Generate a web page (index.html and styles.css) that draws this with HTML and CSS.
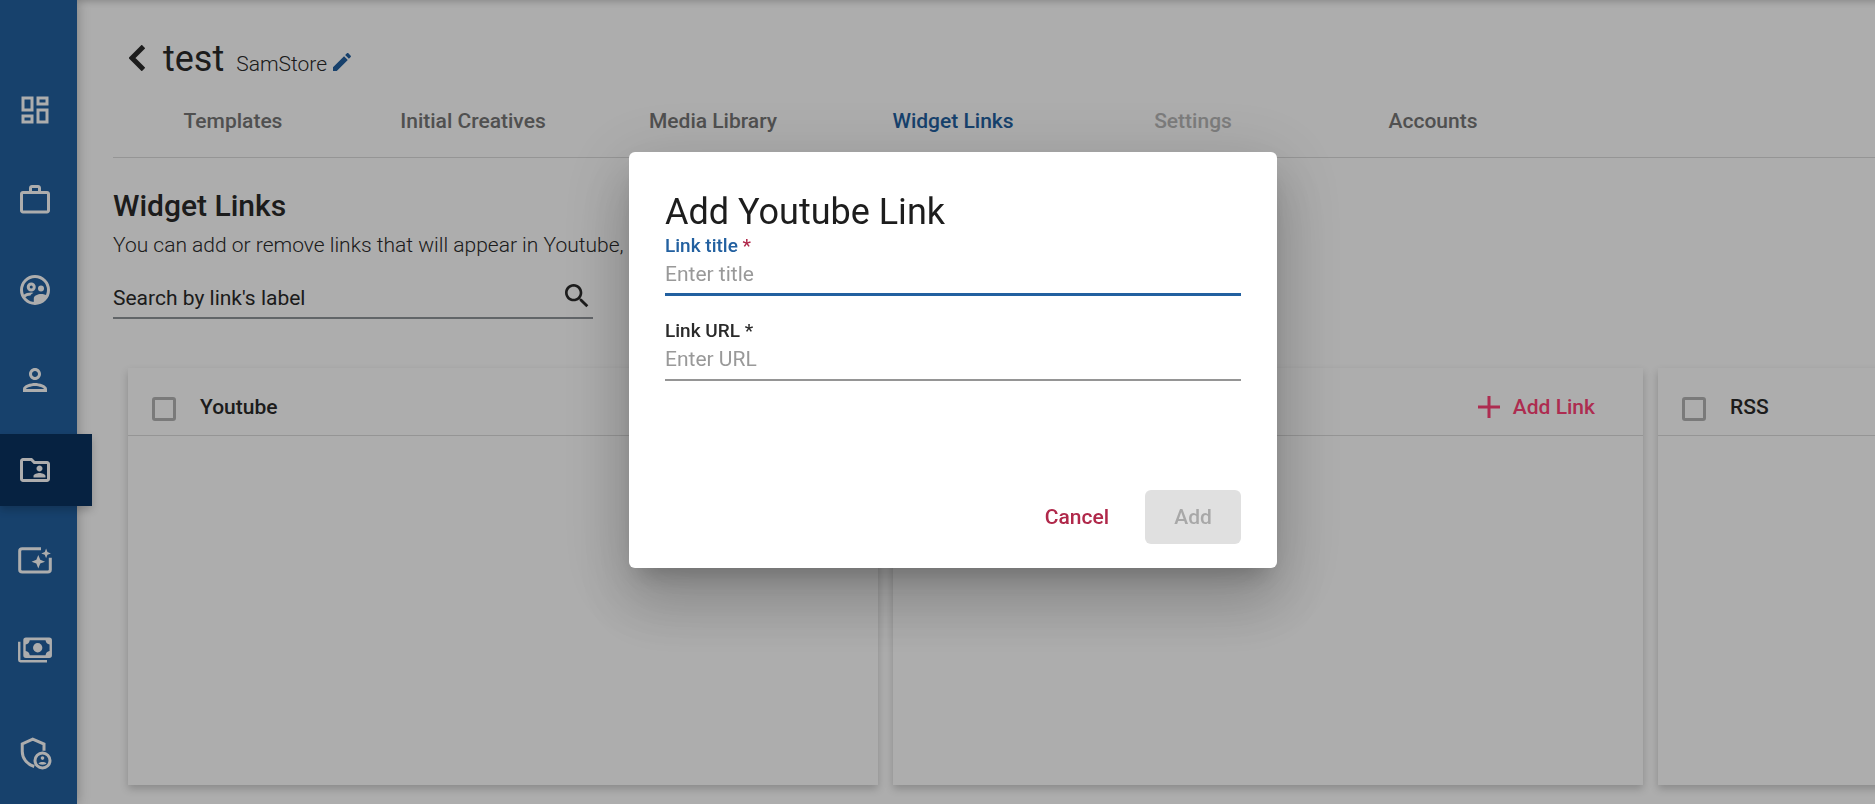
FILE: index.html
```html
<!DOCTYPE html>
<html lang="en">
<head>
    <meta charset="UTF-8">
    <meta name="viewport" content="width=device-width, initial-scale=1.0">
    <title>Widget Links</title>
    <link rel="stylesheet" href="styles.css">
</head>
<body>
    <div class="app">
        <!-- Sidebar -->
        <nav class="sidebar" aria-label="Main">
            <a class="nav-item" href="#" aria-label="Dashboard">
                <svg class="icon" viewBox="0 0 24 24"><path d="M19 5v2h-4V5h4M9 5v6H5V5h4m10 8v6h-4v-6h4M9 17v2H5v-2h4M21 3h-8v6h8V3zM11 3H3v10h8V3zm10 8h-8v10h8V11zm-10 4H3v6h8v-6z"/></svg>
            </a>
            <a class="nav-item" href="#" aria-label="Work">
                <svg class="icon" viewBox="0 0 24 24"><path d="M14 6V4h-4v2h4zM4 8v11h16V8H4zm16-2c1.11 0 2 .89 2 2v11c0 1.11-.89 2-2 2H4c-1.11 0-2-.89-2-2l.01-11c0-1.11.88-2 1.99-2h4V4c0-1.11.89-2 2-2h4c1.11 0 2 .89 2 2v2h4z"/></svg>
            </a>
            <a class="nav-item" href="#" aria-label="Groups">
                <svg class="icon" viewBox="0 0 24 24">
                    <circle class="line" cx="12" cy="12" r="9"/>
                    <circle class="line" cx="9.5" cy="10" r="2"/>
                    <circle cx="16" cy="11" r="2"/>
                    <path d="M4 15.5C5.5 14 7.7 13.6 9.5 13.6L11 13.8C10 14.4 9.3 15 9 15.7C7.5 15.8 6.3 16.2 5.3 17zM11.2 21V17.6C11.2 15.8 14 14.7 16 14.7C17.5 14.7 19 15 20.5 15.8C19 19 16 21.2 11.2 21z"/>
                </svg>
            </a>
            <a class="nav-item" href="#" aria-label="Users">
                <svg class="icon" viewBox="0 0 24 24"><path d="M12 6c1.1 0 2 .9 2 2s-.9 2-2 2-2-.9-2-2 .9-2 2-2m0 10c2.7 0 5.8 1.29 6 2H6c.23-.72 3.31-2 6-2m0-12C9.79 4 8 5.79 8 8s1.79 4 4 4 4-1.79 4-4-1.79-4-4-4zm0 10c-2.67 0-8 1.34-8 4v2h16v-2c0-2.66-5.33-4-8-4z"/></svg>
            </a>
            <a class="nav-item active" href="#" aria-label="Shared folders" aria-current="page">
                <svg class="icon" viewBox="0 0 24 24"><path d="M20 6h-8l-2-2H4c-1.1 0-1.99.9-1.99 2L2 18c0 1.1.9 2 2 2h16c1.1 0 2-.9 2-2V8c0-1.1-.9-2-2-2zm0 12H4V6h5.17l2 2H20v10zm-5-5c1.1 0 2-.9 2-2s-.9-2-2-2-2 .9-2 2 .9 2 2 2zm-4 4h8v-1c0-1.33-2.67-2-4-2s-4 .67-4 2v1z"/></svg>
            </a>
            <a class="nav-item" href="#" aria-label="Creatives">
                <svg class="icon" viewBox="0 0 24 24">
                    <path class="line" d="M16 4.5H3.5Q1.8 4.5 1.8 6V18.5Q1.8 20 3.5 20H20.5Q22.2 20 22.2 18.5V10.5"/>
                    <path d="M14.2 8.6L15.5 11.8L18.7 13.1L15.5 14.4L14.2 17.6L12.9 14.4L9.7 13.1L12.9 11.8zM19.4 4.4L20.3 6.7L22.6 7.6L20.3 8.5L19.4 10.8L18.5 8.5L16.2 7.6L18.5 6.7z"/>
                </svg>
            </a>
            <a class="nav-item" href="#" aria-label="Payments">
                <svg class="icon" viewBox="0 0 24 24">
                    <path fill-rule="evenodd" d="M6 3.7H21.5Q23.3 3.7 23.3 5.5V15.5Q23.3 17.3 21.5 17.3H6Q4.2 17.3 4.2 15.5V5.5Q4.2 3.7 6 3.7zM8.5 5.5Q8 8 5.8 8.3V12.7Q8 13 8.5 15.5H19Q19.500 13 21.7 12.7V8.3Q19.5 8 19 5.5z"/>
                    <circle cx="13.8" cy="10.5" r="3.1"/>
                    <path d="M.7 6.5H2.3V18.7H20V20.3H2.3Q.7 20.3 .7 18.7z"/>
                </svg>
            </a>
            <a class="nav-item nav-admin" href="#" aria-label="Admin">
                <svg class="icon" viewBox="0 0 24 24">
                    <path class="line" d="M18 10.5V6L10.5 2.8L3.5 6V11C3.5 15.5 6.5 19.5 11.5 21"/>
                    <circle class="line" cx="17" cy="17" r="5"/>
                    <circle cx="17" cy="15.4" r="1.2"/>
                    <path d="M14.4 19.2C14.4 17.5 19.6 17.5 19.6 19.2Q17 20.6 14.4 19.2z"/>
                </svg>
            </a>
        </nav>

        <main class="content">
            <header class="page-header">
                <button class="icon-button back" type="button" aria-label="Back">
                    <svg viewBox="0 0 16 26"><path d="M14.500 1.500L3 13L14.500 24.500"/></svg>
                </button>
                <h1>test</h1>
                <span class="store">SamStore</span>
                <button class="icon-button edit" type="button" aria-label="Edit">
                    <svg viewBox="0 0 24 21"><path d="M3 17.25V21h3.75L17.81 9.94l-3.75-3.75L3 17.25zM20.71 7.04c.39-.39.39-1.02 0-1.41l-2.34-2.34c-.39-.39-1.02-.39-1.41 0l-1.83 1.83 3.75 3.75 1.83-1.83z"/></svg>
                </button>
            </header>

            <nav class="tabs" aria-label="Project">
                <a class="tab" href="#">Templates</a>
                <a class="tab" href="#">Initial Creatives</a>
                <a class="tab" href="#">Media Library</a>
                <a class="tab active" href="#" aria-current="page">Widget Links</a>
                <a class="tab disabled" aria-disabled="true">Settings</a>
                <a class="tab" href="#">Accounts</a>
            </nav>

            <section class="intro">
                <h2>Widget Links</h2>
                <p>You can add or remove links that will appear in Youtube,</p>
                <div class="search">
                    <input type="text" aria-label="Search by link's label" placeholder="Search by link's label">
                    <svg class="search-icon" viewBox="0 0 24 24"><path d="M15.5 14h-.79l-.28-.27C15.41 12.59 16 11.11 16 9.5 16 5.91 13.09 3 9.5 3S3 5.91 3 9.5 5.91 16 9.5 16c1.61 0 3.09-.59 4.23-1.57l.27.28v.79l5 4.99L20.49 19l-4.99-5zm-6 0C7.01 14 5 11.99 5 9.5S7.01 5 9.5 5 14 7.01 14 9.5 11.99 14 9.5 14z"/></svg>
                </div>
            </section>

            <div class="cards">
                <section class="card">
                    <div class="card-header">
                        <label><input type="checkbox"><span>Youtube</span></label>
                    </div>
                </section>
                <section class="card">
                    <div class="card-header">
                        <button class="add-link" type="button">
                            <svg viewBox="0 0 22 22"><path d="M11 0V22M0 11H22"/></svg>
                            Add Link
                        </button>
                    </div>
                </section>
                <section class="card">
                    <div class="card-header">
                        <label><input type="checkbox"><span>RSS</span></label>
                    </div>
                </section>
            </div>
        </main>
    </div>

    <!-- Add link dialog -->
    <div class="backdrop">
        <form class="dialog" role="dialog" aria-modal="true" aria-labelledby="dialog-title">
            <h2 id="dialog-title">Add Youtube Link</h2>
            <div class="field focused">
                <label for="link-title">Link title <span class="required">*</span></label>
                <input id="link-title" type="text" placeholder="Enter title">
            </div>
            <div class="field">
                <label for="link-url">Link URL <span class="required">*</span></label>
                <input id="link-url" type="text" placeholder="Enter URL">
            </div>
            <div class="actions">
                <button class="cancel" type="button">Cancel</button>
                <button class="add" type="submit" disabled>Add</button>
            </div>
        </form>
    </div>
</body>
</html>
```
FILE: styles.css
```css
* {
    box-sizing: border-box;
}
body {
    margin: 0;
    font-family: Roboto, sans-serif;
    font-size: 21px;
    line-height: 30px;
    color: #2a2a2a;
    background: #fff;
    overflow: hidden;
}
h1, h2, p {
    margin: 0;
}
a {
    color: inherit;
    text-decoration: none;
}
button, input {
    font: inherit;
    color: inherit;
    background: none;
    border: 0;
    padding: 0;
}
.app {
    display: flex;
    height: 100vh;
    box-shadow: inset 0 8px 6px -6px rgba(0, 0, 0, 0.2);
}

/* Sidebar */
.sidebar {
    display: flex;
    flex-direction: column;
    gap: 18px;
    flex: 0 0 77px;
    min-width: 0;
    padding-top: 74px;
    background: #2260a0;
    box-shadow: 0 0 12px rgba(0, 0, 0, 0.3);
    z-index: 1;
}
.nav-item {
    display: flex;
    align-items: center;
    flex: 0 0 72px;
    padding-left: 17px;
}
.nav-item.active {
    width: 92px;
    background: #093360;
    box-shadow: 0 4px 8px rgba(0, 0, 0, 0.2);
}
.nav-admin {
    margin-top: 13px;
}
.icon {
    width: 36px;
    height: 36px;
    fill: #fff;
}
.icon .line {
    fill: none;
    stroke: #fff;
    stroke-width: 2;
}

/* Page header */
.content {
    flex: 1;
    min-width: 0;
    padding-left: 36px;
    overflow: hidden;
}
.page-header {
    display: flex;
    align-items: baseline;
    padding: 35px 0 1px 16px;
}
.page-header h1 {
    margin: 0 12px 0 18px;
    font-size: 36px;
    font-weight: 400;
    line-height: 48px;
}
.store {
    font-weight: 300;
}
.icon-button {
    display: flex;
    cursor: pointer;
}
.back svg {
    width: 16px;
    height: 26px;
    fill: none;
    stroke: #2a2a2a;
    stroke-width: 5;
}
.edit {
    margin-left: 3px;
}
.edit svg {
    width: 24px;
    height: 21px;
    fill: #2260a0;
}

/* Tabs */
.tabs {
    display: flex;
    height: 74px;
    border-bottom: 1px solid #dcdcdc;
}
.tab {
    flex: 0 0 240px;
    line-height: 74px;
    font-weight: 500;
    text-align: center;
    color: #767676;
}
.tab.active {
    color: #2260a0;
}
.tab.disabled {
    color: #b8b8b8;
}

/* Intro and search */
.intro {
    padding-top: 30px;
}
.intro h2 {
    font-size: 30px;
    font-weight: 500;
    line-height: 36px;
}
.intro p {
    padding-top: 6px;
    font-weight: 300;
}
.search {
    display: flex;
    align-items: flex-start;
    width: 480px;
    height: 42px;
    margin-top: 17px;
    border-bottom: 2px solid #90959a;
}
.search input {
    flex: 1;
    min-width: 0;
    height: 42px;
}
.search input::placeholder {
    color: #2a2a2a;
}
.search-icon {
    width: 32px;
    height: 38px;
    fill: #2a2a2a;
}

/* Cards */
.cards {
    display: flex;
    gap: 15px;
    padding: 49px 0 24px 15px;
}
.card {
    flex: 0 0 750px;
    min-height: 417px;
    background: #fff;
    box-shadow: 0 4px 8px rgba(0, 0, 0, 0.2);
}
.card-header {
    display: flex;
    align-items: center;
    height: 68px;
    padding: 10px 48px 0 24px;
    border-bottom: 1px solid #dcdcdc;
    font-weight: 500;
}
.card-header label {
    display: flex;
    align-items: flex-end;
    gap: 24px;
}
.card-header input {
    appearance: none;
    width: 24px;
    height: 24px;
    margin: 0 0 1px;
    border: 3px solid #b4b4b4;
    border-radius: 3px;
}
.add-link {
    display: flex;
    align-items: center;
    gap: 13px;
    margin-left: auto;
    color: #ff4176;
    font-weight: 500;
}
.add-link svg {
    width: 22px;
    height: 22px;
    stroke: #ff4176;
    stroke-width: 3;
}

/* Dialog */
.backdrop {
    position: fixed;
    inset: 0;
    display: flex;
    align-items: flex-start;
    justify-content: center;
    padding: 152px 0 0 31px;
    background: rgba(0, 0, 0, 0.32);
    z-index: 10;
}
.dialog {
    display: flex;
    flex-direction: column;
    width: 648px;
    min-height: 416px;
    padding: 36px 36px 24px;
    background: #fff;
    border-radius: 6px;
    box-shadow: 0 16px 22px -10px rgba(0, 0, 0, 0.2), 0 36px 57px 4px rgba(0, 0, 0, 0.14), 0 14px 69px 12px rgba(0, 0, 0, 0.12);
}
.dialog h2 {
    font-size: 36px;
    font-weight: 400;
    line-height: 48px;
    color: #1d1d1d;
}
.field {
    display: flex;
    flex-direction: column;
    height: 60px;
    margin-bottom: 25px;
    border-bottom: 2px solid #959595;
}
.field label {
    font-size: 19px;
    font-weight: 500;
    line-height: 20px;
}
.field input {
    height: 36px;
    outline: none;
}
.field input::placeholder {
    color: #999;
}
.field.focused {
    border-bottom: 3px solid #2260a0;
}
.field.focused label {
    color: #2260a0;
}
.field.focused .required {
    color: #b0284a;
}
.actions {
    display: flex;
    justify-content: flex-end;
    gap: 36px;
    margin-top: auto;
}
.actions button {
    height: 54px;
    font-weight: 500;
}
.cancel {
    color: #b0284a;
}
.actions .add {
    width: 96px;
    border-radius: 6px;
    background: #e0e0e0;
    color: #a8a8a8;
}
```
